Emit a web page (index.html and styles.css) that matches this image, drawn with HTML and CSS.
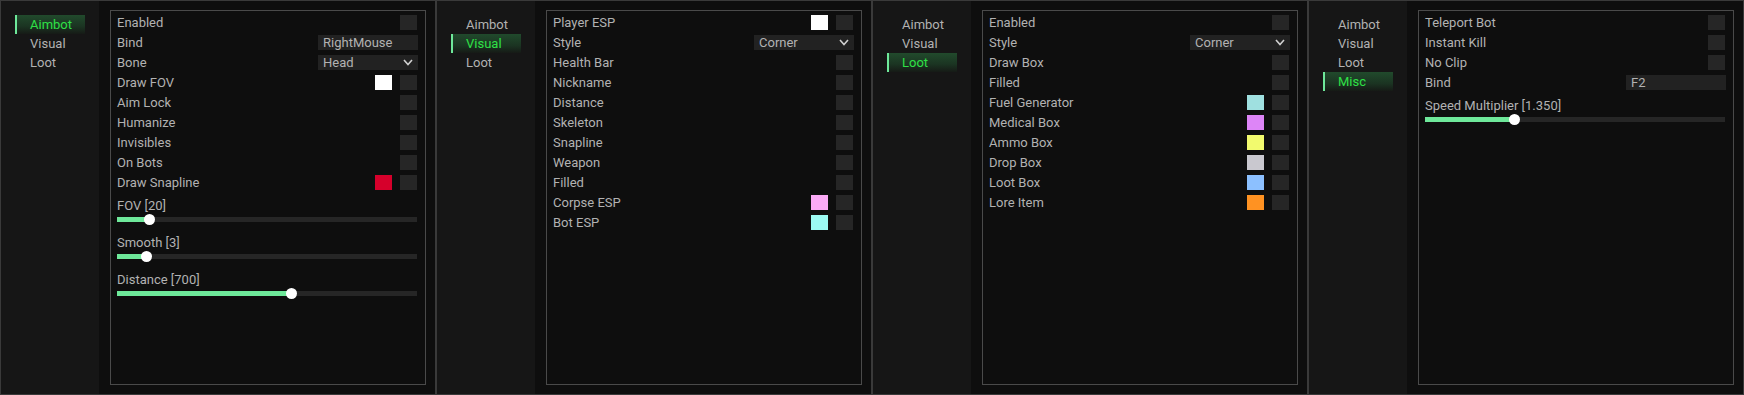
FILE: index.html
```html
<!DOCTYPE html>
<html lang="en">
<head>
    <meta charset="UTF-8">
    <title>Menu</title>
    <link rel="stylesheet" href="styles.css">
</head>
<body>
    <div class="menus">
        <!-- Aimbot -->
        <div class="menu">
            <nav class="tabs">
                <div class="tab active">Aimbot</div>
                <div class="tab">Visual</div>
                <div class="tab">Loot</div>
            </nav>
            <div class="content">
                <div class="frame">
                    <div class="row"><span class="name">Enabled</span><span class="check"></span></div>
                    <div class="row"><span class="name">Bind</span><span class="field">RightMouse</span></div>
                    <div class="row"><span class="name">Bone</span><span class="field select">Head<svg class="chev" viewBox="0 0 10 7"><path d="M1 1 L5 5.5 L9 1"/></svg></span></div>
                    <div class="row"><span class="name">Draw FOV</span><span class="swatch" style="background:#ffffff"></span><span class="check"></span></div>
                    <div class="row"><span class="name">Aim Lock</span><span class="check"></span></div>
                    <div class="row"><span class="name">Humanize</span><span class="check"></span></div>
                    <div class="row"><span class="name">Invisibles</span><span class="check"></span></div>
                    <div class="row"><span class="name">On Bots</span><span class="check"></span></div>
                    <div class="row"><span class="name">Draw Snapline</span><span class="swatch" style="background:#d6002b"></span><span class="check"></span></div>
                    <div class="slider">
                        <div class="label">FOV [20]</div>
                        <div class="track"><div class="fill" style="width:11%"></div></div>
                    </div>
                    <div class="slider">
                        <div class="label">Smooth [3]</div>
                        <div class="track"><div class="fill" style="width:10%"></div></div>
                    </div>
                    <div class="slider">
                        <div class="label">Distance [700]</div>
                        <div class="track"><div class="fill" style="width:58.3%"></div></div>
                    </div>
                </div>
            </div>
        </div>

        <!-- Visual -->
        <div class="menu">
            <nav class="tabs">
                <div class="tab">Aimbot</div>
                <div class="tab active">Visual</div>
                <div class="tab">Loot</div>
            </nav>
            <div class="content">
                <div class="frame">
                    <div class="row"><span class="name">Player ESP</span><span class="swatch" style="background:#ffffff"></span><span class="check"></span></div>
                    <div class="row"><span class="name">Style</span><span class="field select">Corner<svg class="chev" viewBox="0 0 10 7"><path d="M1 1 L5 5.5 L9 1"/></svg></span></div>
                    <div class="row"><span class="name">Health Bar</span><span class="check"></span></div>
                    <div class="row"><span class="name">Nickname</span><span class="check"></span></div>
                    <div class="row"><span class="name">Distance</span><span class="check"></span></div>
                    <div class="row"><span class="name">Skeleton</span><span class="check"></span></div>
                    <div class="row"><span class="name">Snapline</span><span class="check"></span></div>
                    <div class="row"><span class="name">Weapon</span><span class="check"></span></div>
                    <div class="row"><span class="name">Filled</span><span class="check"></span></div>
                    <div class="row"><span class="name">Corpse ESP</span><span class="swatch" style="background:#fbaaf6"></span><span class="check"></span></div>
                    <div class="row"><span class="name">Bot ESP</span><span class="swatch" style="background:#9cfaf3"></span><span class="check"></span></div>
                </div>
            </div>
        </div>

        <!-- Loot -->
        <div class="menu">
            <nav class="tabs">
                <div class="tab">Aimbot</div>
                <div class="tab">Visual</div>
                <div class="tab active">Loot</div>
            </nav>
            <div class="content">
                <div class="frame">
                    <div class="row"><span class="name">Enabled</span><span class="check"></span></div>
                    <div class="row"><span class="name">Style</span><span class="field select">Corner<svg class="chev" viewBox="0 0 10 7"><path d="M1 1 L5 5.5 L9 1"/></svg></span></div>
                    <div class="row"><span class="name">Draw Box</span><span class="check"></span></div>
                    <div class="row"><span class="name">Filled</span><span class="check"></span></div>
                    <div class="row"><span class="name">Fuel Generator</span><span class="swatch" style="background:#9fe0e0"></span><span class="check"></span></div>
                    <div class="row"><span class="name">Medical Box</span><span class="swatch" style="background:#dd85f7"></span><span class="check"></span></div>
                    <div class="row"><span class="name">Ammo Box</span><span class="swatch" style="background:#f2fa6e"></span><span class="check"></span></div>
                    <div class="row"><span class="name">Drop Box</span><span class="swatch" style="background:#c9c8cf"></span><span class="check"></span></div>
                    <div class="row"><span class="name">Loot Box</span><span class="swatch" style="background:#8cc0ff"></span><span class="check"></span></div>
                    <div class="row"><span class="name">Lore Item</span><span class="swatch" style="background:#ff9222"></span><span class="check"></span></div>
                </div>
            </div>
        </div>

        <!-- Misc -->
        <div class="menu">
            <nav class="tabs">
                <div class="tab">Aimbot</div>
                <div class="tab">Visual</div>
                <div class="tab">Loot</div>
                <div class="tab active">Misc</div>
            </nav>
            <div class="content">
                <div class="frame">
                    <div class="row"><span class="name">Teleport Bot</span><span class="check"></span></div>
                    <div class="row"><span class="name">Instant Kill</span><span class="check"></span></div>
                    <div class="row"><span class="name">No Clip</span><span class="check"></span></div>
                    <div class="row"><span class="name">Bind</span><span class="field">F2</span></div>
                    <div class="slider">
                        <div class="label">Speed Multiplier [1.350]</div>
                        <div class="track"><div class="fill" style="width:30%"></div></div>
                    </div>
                </div>
            </div>
        </div>
    </div>
</body>
</html>
```

FILE: styles.css
```css
body {
    margin: 0;
    padding: 0;
    background-color: #0e0e0e;
    font-family: Roboto, "Liberation Sans", sans-serif;
    font-size: 13px;
    color: #b2b2b2;
}
.menus {
    display: flex;
    width: 1744px;
    height: 395px;
}
.menu {
    box-sizing: border-box;
    width: 436px;
    height: 395px;
    border: 1px solid #3a3a3a;
    display: flex;
}
.tabs {
    width: 84px;
    background-color: #161616;
    padding: 14px 0 0 14px;
}
.tab {
    width: 55px;
    height: 19px;
    line-height: 19px;
    padding-left: 15px;
    color: #b2b2b2;
}
.tab.active {
    color: #2fe046;
    background: linear-gradient(to bottom, #214a2c 0%, #1b3422 60%, #161a16 100%);
    box-shadow: inset 2px 0 0 #6ee89a;
}
.content {
    flex: 1;
    background-color: #0e0e0e;
    padding: 9px 9px 9px 11px;
    display: flex;
}
.frame {
    flex: 1;
    border: 1px solid #4a4a4a;
    padding: 4px 8px 0 6px;
    display: flex;
    flex-direction: column;
    gap: 5px;
}
.row {
    display: flex;
    align-items: center;
    height: 15px;
}
.name {
    flex: 1;
    line-height: 15px;
}
.check {
    width: 17px;
    height: 15px;
    background-color: #262626;
}
.swatch {
    width: 17px;
    height: 15px;
    margin-right: 8px;
}
.field {
    box-sizing: border-box;
    width: 100px;
    height: 15px;
    line-height: 15px;
    padding-left: 5px;
    margin-right: -1px;
    background-color: #222222;
    display: flex;
    align-items: center;
}
.select {
    justify-content: space-between;
    padding-right: 5px;
}
.chev {
    width: 10px;
    height: 7px;
    fill: none;
    stroke: #d0d0d0;
    stroke-width: 1.6;
}
.slider {
    margin-top: 3px;
    margin-bottom: 8px;
}
.slider + .slider {
    margin-top: 0;
}
.label {
    height: 15px;
    line-height: 15px;
    margin-bottom: 4px;
}
.track {
    width: 300px;
    height: 5px;
    background-color: #262626;
}
.fill {
    position: relative;
    height: 5px;
    background-color: #6ee89a;
}
.fill::after {
    content: "";
    position: absolute;
    right: -5px;
    top: -3px;
    width: 11px;
    height: 11px;
    border-radius: 50%;
    background-color: #ffffff;
}
```
